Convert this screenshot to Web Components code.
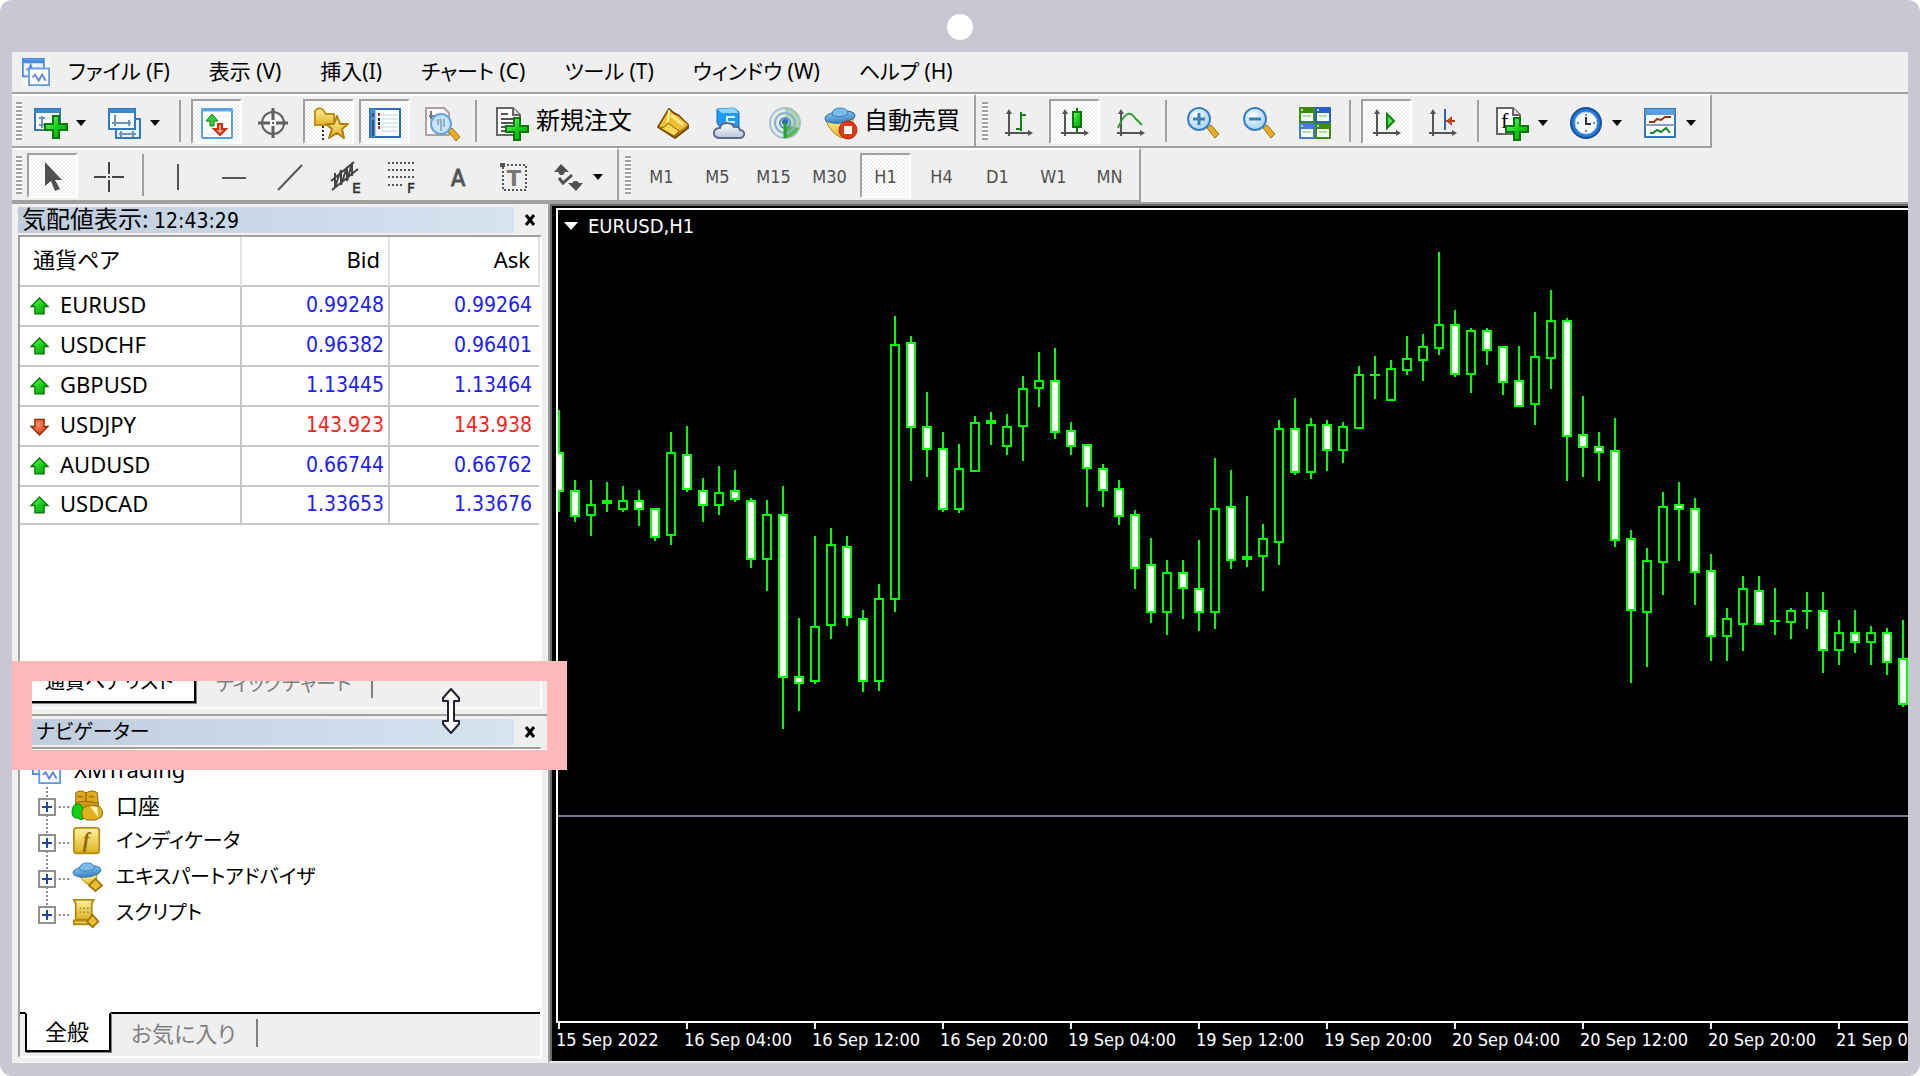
<!DOCTYPE html>
<html lang="ja">
<head>
<meta charset="utf-8">
<title>EURUSD,H1</title>
<style>
  html, body { margin: 0; height: 100%; background: #fff; }
  body {
    --face: #efefef;
    --shade: #a0a0a0;
    --ui: "Noto Sans", "Noto Sans CJK JP", sans-serif;
    --tahoma: "DejaVu Sans Condensed", "DejaVu Sans", "Noto Sans CJK JP", sans-serif;
    font-family: var(--ui);
    font-size: 22px;
    line-height: 28px;
    color: #000;
  }
  dock-panel time { font: 21px/22px "DejaVu Sans Condensed", "DejaVu Sans", sans-serif; }
</style>
</head>
<body>
<device-frame>
  <trade-terminal>
    <menu-bar slot="menu"></menu-bar>

    <tool-bar slot="tools">
      <tool-group>
        <tool-button icon="newchart" label="新規チャート" drop></tool-button>
        <tool-button icon="profiles" label="プロファイル" drop></tool-button>
        <tool-separator></tool-separator>
        <tool-button icon="market" label="気配値表示" pressed></tool-button>
        <tool-button icon="target" label="データウィンドウ"></tool-button>
        <tool-button icon="navigator" label="ナビゲーター" pressed></tool-button>
        <tool-button icon="terminal" label="ターミナル" pressed></tool-button>
        <tool-button icon="tester" label="ストラテジーテスター"></tool-button>
        <tool-separator></tool-separator>
        <tool-button icon="neworder" wide>新規注文</tool-button>
        <tool-button icon="book" label="MetaEditor"></tool-button>
        <tool-button icon="cloud" label="VPS"></tool-button>
        <tool-button icon="signal" label="シグナル"></tool-button>
        <tool-button icon="expert" wide>自動売買</tool-button>
      </tool-group>
      <tool-group>
        <tool-button icon="bars" label="バーチャート"></tool-button>
        <tool-button icon="candles" label="ローソク足" pressed></tool-button>
        <tool-button icon="line" label="ラインチャート"></tool-button>
        <tool-separator></tool-separator>
        <tool-button icon="zoomin" label="ズームイン"></tool-button>
        <tool-button icon="zoomout" label="ズームアウト"></tool-button>
        <tool-button icon="tile" label="整列"></tool-button>
        <tool-separator></tool-separator>
        <tool-button icon="autoscroll" label="自動スクロール" pressed></tool-button>
        <tool-button icon="shift" label="チャートシフト"></tool-button>
        <tool-separator></tool-separator>
        <tool-button icon="indicator" label="インディケータ" drop></tool-button>
        <tool-button icon="clock" label="時間足設定" drop></tool-button>
        <tool-button icon="template" label="定型チャート" drop></tool-button>
      </tool-group>
    </tool-bar>

    <tool-bar slot="tools">
      <tool-group>
        <tool-button icon="pointer" label="カーソル" pressed></tool-button>
        <tool-button icon="cross" label="クロスヘア"></tool-button>
        <tool-separator narrow></tool-separator>
        <tool-button icon="vline" label="垂直線"></tool-button>
        <tool-button icon="hline" label="水平線"></tool-button>
        <tool-button icon="trend" label="トレンドライン"></tool-button>
        <tool-button icon="channel" label="チャネル"></tool-button>
        <tool-button icon="fibo" label="フィボナッチ"></tool-button>
        <tool-button icon="textA" label="テキスト"></tool-button>
        <tool-button icon="textT" label="ラベル"></tool-button>
        <tool-button icon="arrows" label="矢印" drop></tool-button>
      </tool-group>
      <tool-group>
        <tool-button>M1</tool-button>
        <tool-button>M5</tool-button>
        <tool-button>M15</tool-button>
        <tool-button>M30</tool-button>
        <tool-button pressed>H1</tool-button>
        <tool-button>H4</tool-button>
        <tool-button>D1</tool-button>
        <tool-button>W1</tool-button>
        <tool-button>MN</tool-button>
      </tool-group>
    </tool-bar>

    <dock-panel slot="dock" style="flex-grow:514">
      <span slot="title">気配値表示: <time>12:43:29</time></span>
      <market-watch></market-watch>
      <tab-strip slot="tabs" kana tabs="通貨ペアリスト,ティックチャート"></tab-strip>
    </dock-panel>
    <dock-panel slot="dock" inset style="flex-grow:347">
      <span slot="title">ナビゲーター</span>
      <nav-tree></nav-tree>
      <tab-strip slot="tabs" tabs="全般,お気に入り"></tab-strip>
      <focus-frame slot="overlay"></focus-frame>
    </dock-panel>

    <price-chart slot="chart" symbol="EURUSD,H1"></price-chart>
  </trade-terminal>
</device-frame>

<script>
const DEFS = `<defs>
  <linearGradient id="g" x1="0" y1="0" x2="1" y2="1"><stop offset="0" stop-color="#7dff7d"/><stop offset=".5" stop-color="#18d018"/><stop offset="1" stop-color="#0a9a0a"/></linearGradient>
  <linearGradient id="y" x1="0" y1="0" x2="0" y2="1"><stop offset="0" stop-color="#fff4a0"/><stop offset="1" stop-color="#e0b020"/></linearGradient>
  <linearGradient id="b" x1="0" y1="0" x2="0" y2="1"><stop offset="0" stop-color="#8cc8f4"/><stop offset="1" stop-color="#3a80c0"/></linearGradient>
  <linearGradient id="c" x1="0" y1="0" x2="0" y2="1"><stop offset="0" stop-color="#fff"/><stop offset="1" stop-color="#b8c4d8"/></linearGradient>
  <radialGradient id="l" cx=".4" cy=".35" r=".8"><stop offset="0" stop-color="#fff"/><stop offset="1" stop-color="#8cc8f0"/></radialGradient>
  <radialGradient id="r" cx=".4" cy=".35" r=".8"><stop offset="0" stop-color="#ff9060"/><stop offset="1" stop-color="#c02800"/></radialGradient>
</defs>`;
const PLUS = (x, y) => `<path transform="translate(${x} ${y})" d="M9 1h6v8h8v6h-8v8H9v-8H1V9h8z" fill="url(#g)" stroke="#087808" stroke-width="2"/>`;
const AXES = `<path d="M6 5v24M2 26h25" stroke="#555" stroke-width="2" fill="none"/><path d="M6 2l-3 5h6zM30 26l-5-3v6z" fill="#555"/>`;
const HAT = `<ellipse cx="16" cy="10" rx="15" ry="6" fill="url(#b)" stroke="#2870a8" transform="rotate(-7 16 10)"/><path d="M8 8q0-7 8-7t8 6q-8 5-16 1z" fill="#7cbcec" stroke="#3a80b8"/>`;
const LENS = (s) => `<path d="M20 21l4-3 8 9-4 4z" fill="#e4b020" stroke="#a07010"/><circle cx="12" cy="12" r="11" fill="url(#l)" stroke="#3a80c8" stroke-width="2"/>${s}`;
const ICONS = {
  app: `<rect x="1" y="1" width="24" height="20" fill="#eef4ff" stroke="#4a8ae0" stroke-width="2"/><path d="M1 4h24" stroke="#4a8ae0" stroke-width="4"/><path d="M5 13h3l2-5 3 8 2-4h6" fill="none" stroke="#4a8ae0" stroke-width="2"/><rect x="8" y="12" width="23" height="19" fill="#fff" stroke="#5a9ae8" stroke-width="2"/><path d="M12 22l3-3 4 7 4-7 4 7" fill="none" stroke="#5a80e0" stroke-width="2"/>`,
  newchart: `<rect x="1" y="2" width="25" height="21" fill="#f6faff" stroke="#3478b8" stroke-width="2"/><path d="M1 4h25" stroke="#3f88cc" stroke-width="4"/><path d="M8 9v12M5 11h6M5 18h6" stroke="#6a94b4" stroke-width="2"/>${PLUS(10, 8)}`,
  profiles: `<rect x="8" y="12" width="24" height="19" fill="#e8f2fc" stroke="#3478b8" stroke-width="2"/><path d="M11 27h17M13 24v6M25 24v6" stroke="#6a94b4" stroke-width="2"/><rect x="1" y="2" width="26" height="20" fill="#f6faff" stroke="#3478b8" stroke-width="2"/><path d="M1 4h26" stroke="#3f88cc" stroke-width="4"/><path d="M7 8v11M4 16h19M21 13v6" stroke="#6a94b4" stroke-width="2"/>`,
  market: `<rect x="1" y="2" width="30" height="29" rx="1" fill="#fff" stroke="#5a9edc" stroke-width="2"/><path d="M1 3h30" stroke="#5aa4e8" stroke-width="3"/><path d="M5 9h22M5 15h22M5 21h22M5 27h22" stroke="#e0e6ec"/><path d="M11 7l6 7h-4v5H9v-5H5z" fill="#3cc83c" stroke="#108010"/><path d="M19 28l-6-6h4v-5h4v5h4z" fill="#f8a080" stroke="#c83010" stroke-width="2"/>`,
  target: `<circle cx="16" cy="16" r="11" fill="#f4f4f4" stroke="#606060" stroke-width="2"/><path d="M16 1v12M16 19v12M1 16h12M19 16h12" stroke="#606060" stroke-width="3"/><path d="M15 16h2" stroke="#606060" stroke-width="2"/>`,
  navigator: `<path d="M2 18V4q4-5 8-1l3 4h8v11z" fill="url(#y)" stroke="#c09020" stroke-width="2"/><path d="M10 19v14" stroke="#333" stroke-width="2" stroke-dasharray="2 2"/><path d="M24 9l3 8h8l-6 5 2 9-7-5-8 5 3-9-6-5h8z" fill="url(#y)" stroke="#b08010" stroke-width="2" stroke-linejoin="round"/>`,
  terminal: `<rect x="1" y="2" width="30" height="28" fill="#fff" stroke="#2f6fb0" stroke-width="2"/><path d="M4 2v28" stroke="#4a90d0" stroke-width="5"/><path d="M4 6v4M4 13v16" stroke="#223" stroke-width="2" opacity=".6"/><path d="M12 8h17M12 12h17M12 16h17M12 20h17M12 24h17" stroke="#b8d4f0" stroke-width="1"/><path d="M10 6v3M10 19v3" stroke="#e02020" stroke-width="2"/><path d="M10 11v3M10 15v3" stroke="#222" stroke-width="2"/>`,
  tester: `<path d="M1 1h18l5 5v22H1z" fill="#fafafa" stroke="#b0a0a0" stroke-width="2"/><path d="M6 4v8M4 9h6v6M15 6v10M19 10v10" stroke="#777" stroke-width="2" fill="none"/><path d="M23 24l4-3 8 9-4 4z" fill="#e4b020" stroke="#a07010"/><circle cx="16" cy="17" r="10" fill="#c4e2f8" fill-opacity=".9" stroke="#68a4d8" stroke-width="2"/><path d="M13 12v6M16 12v12M19 12v8" stroke="#90b0c8" stroke-width="2"/>`,
  neworder: `<path d="M1 1h16l7 7v20H1z" fill="#fff" stroke="#666" stroke-width="2"/><path d="M17 1v7h7" fill="#ddd" stroke="#666" stroke-width="2"/><path d="M5 7h7M5 12h12M5 16h12M5 20h8M5 24h7" stroke="#555" stroke-width="2"/>${PLUS(9, 10)}`,
  book: `<path d="M1 20L12 2q5 5 9 6l10 10v3L18 31z" fill="#b87814" stroke="#7a4a08" stroke-width="2" stroke-linejoin="round"/><path d="M12 3q5 5 9 6l10 9-9 6-11-7q-3 6-9 3z" fill="#f0c030"/><path d="M12 3q0 8-2 13" stroke="#fff0a0" stroke-width="2" fill="none"/><path d="M2 20q6 2 9-4l11 8-5 5z" fill="#ffd858" stroke="#98600c"/><path d="M14 8l12 10" stroke="#ffe88c" stroke-width="3"/>`,
  cloud: `<path d="M4 2l17-1 5 4v17H8L4 16z" fill="#1e9cf8" stroke="#1070c0"/><path d="M4 2l5 4h17L21 1z" fill="#90d4ff"/><path d="M13 10h9M13 15h9M14 9v10" stroke="#d8f0ff" stroke-width="2"/><path d="M6 31q-6-1-5-6 1-4 6-4 1-5 7-5 5 0 7 4 5-1 6 3 5 1 4 5-1 3-4 3z" fill="url(#c)" stroke="#5a6c8c" stroke-width="2"/>`,
  signal: `<circle cx="16" cy="16" r="15" fill="#e4ebe8" stroke="#a8c0d0" stroke-width="2"/><path d="M16 16V1q15 1 15 15t-15 15z" fill="#90c890" opacity=".6"/><path d="M16 18l14 3q-4 9-14 10z" fill="#58b858"/><circle cx="16" cy="16" r="10" fill="none" stroke="#8cb0d0" stroke-width="2"/><circle cx="16" cy="16" r="5" fill="none" stroke="#5890c8" stroke-width="2"/><circle cx="16" cy="15" r="3" fill="#2868b0"/><path d="M16 16v15" stroke="#20a820" stroke-width="3"/>`,
  expert: `<path d="M2 13l27-1v10L18 31q-12-5-16-18z" fill="url(#y)" stroke="#b08818"/>${HAT}<circle cx="24" cy="23" r="9" fill="#e03818" stroke="#b02808"/><path d="M20 19h8v8h-8z" fill="#fff"/>`,
  bars: `${AXES}<path d="M18 5v19M13 22h5M18 8h5" stroke="#108010" stroke-width="2" fill="none"/>`,
  candles: `${AXES}<path d="M18 1v24" stroke="#087808" stroke-width="2"/><rect x="14" y="5" width="8" height="15" fill="url(#g)" stroke="#087808" stroke-width="2"/>`,
  line: `${AXES}<path d="M3 21q9-22 17-10l7 7" fill="none" stroke="#3a9a3a" stroke-width="2"/>`,
  zoomin: LENS(`<path d="M12 6v12M6 12h12" stroke="#3a80b8" stroke-width="3"/>`),
  zoomout: LENS(`<path d="M6 12h12" stroke="#3a80b8" stroke-width="3"/>`),
  tile: [[0, 0, '#3c8c10'], [16, 0, '#2860c8'], [0, 16, '#4878d8'], [16, 16, '#3c8c10']].map(([x, y, c]) => `<rect x="${x}" y="${y}" width="16" height="16" fill="${c}"/><rect x="${x + 2}" y="${y + 6}" width="12" height="8" fill="#f4faf4"/><path d="M${x + 2} ${y + 3}h2M${x + 4} ${y + 9}h8" stroke="#b8d8b8" stroke-width="2"/>`).join(''),
  autoscroll: `${AXES}<path d="M16 7v14l7-7z" fill="#58e058" stroke="#108010" stroke-width="2"/>`,
  shift: `${AXES}<path d="M18 2v21" stroke="#2868a8" stroke-width="2"/><path d="M19 14h9" stroke="#a03810" stroke-width="2"/><path d="M19 14l6-5v10z" fill="#c04818"/>`,
  indicator: `<path d="M1 1h16l7 7v19H1z" fill="#fff" stroke="#666" stroke-width="2"/><path d="M17 1v7h7" fill="#ddd" stroke="#666" stroke-width="2"/><text x="5" y="21" font-family="Liberation Serif,serif" font-size="22">f</text>${PLUS(9, 10)}`,
  clock: `<circle cx="16" cy="16" r="15" fill="#2878d8" stroke="#1450a0" stroke-width="2"/><circle cx="16" cy="16" r="11" fill="#f4f8fc" stroke="#a8c8f0"/><path d="M16 10v7h5" fill="none" stroke="#333" stroke-width="2"/><path d="M16 7v2M16 23v2M7 16h2M23 16h2" stroke="#888" stroke-width="2"/>`,
  template: `<rect x="1" y="2" width="30" height="28" fill="#f8fbff" stroke="#3478b8" stroke-width="2"/><path d="M1 5h30" stroke="#5aa0dc" stroke-width="6"/><path d="M1 18h30" stroke="#88a0b8" stroke-width="2"/><path d="M5 15h5l3-3 4 1 4-3h6" fill="none" stroke="#a02c10" stroke-width="2"/><path d="M6 26h3l4-3 4 2 5-4 4 5" fill="none" stroke="#208820" stroke-width="2"/>`,
  pointer: `<path d="M8 1v24l6-5 4 10 5-2-5-9h7z" fill="#505050"/>`,
  cross: `<path d="M16 1v12M16 19v12M1 16h12M19 16h12M15 16h2" stroke="#444" stroke-width="2"/>`,
  vline: `<path d="M16 3v26" stroke="#555" stroke-width="2"/>`,
  hline: `<path d="M4 17h24" stroke="#555" stroke-width="2"/>`,
  trend: `<path d="M4 29L28 4" stroke="#555" stroke-width="2"/>`,
  channel: `<path d="M1 20L24 1M2 29L28 8M5 12v14M11 9v15M17 6v14M22 2v13M5 26l6-17M11 24l6-18M17 20l5-18" stroke="#444" stroke-width="2" fill="none"/><path d="M21 19h12v14H21z" fill="#efefef"/><text x="22" y="32" font-family="DejaVu Sans" font-size="14" fill="#333" stroke="#333" stroke-width=".5">E</text>`,
  fibo: `<path d="M2 2h27M2 9h27M2 16h27M2 24h15" stroke="#555" stroke-width="2" stroke-dasharray="2 2"/><text x="21" y="32" font-family="DejaVu Sans" font-size="14" fill="#333" stroke="#333" stroke-width=".5">F</text>`,
  textA: `<text x="16" y="25" text-anchor="middle" font-family="DejaVu Sans Condensed" font-size="23" fill="#555" stroke="#555">A</text>`,
  textT: `<rect x="5" y="4" width="23" height="25" fill="none" stroke="#555" stroke-width="2" stroke-dasharray="2 2"/><path d="M2 2h5v4H2z" fill="#555"/><text x="16" y="25" text-anchor="middle" font-family="DejaVu Sans" font-weight="bold" font-size="21" fill="#777">T</text>`,
  arrows: `<path d="M10 3l8 8h-4l-2 3H9l-2-3H3zM25 30l-8-8h4l2-2h3l2 2h4z" fill="#505050"/><path d="M8 17l4 5 9-8" stroke="#505050" stroke-width="3" fill="none"/>`,
  up: `<path d="M16 3l13 13h-6v11H9V16H3z" fill="url(#g)" stroke="#0a7a0a" stroke-width="2"/>`,
  down: `<path d="M16 29L3 16h6V5h14v11h6z" fill="url(#r)" stroke="#902808" stroke-width="2"/>`,
  accounts: `<path d="M4 3q5-4 11 0 7-4 12 0l1 12H4z" fill="#e0aa18" stroke="#8a6008"/><path d="M6 7h6M18 7h6M15 3v12" stroke="#a87810" stroke-width="2"/><path d="M4 14q8-4 24 0v11H4z" fill="#d09a10" stroke="#8a6008"/><path d="M0 24q0-9 6-9t7 10-7 5q-6 0-6-6z" fill="#10d010" stroke="#088008"/><path d="M11 29q-2-11 6-12l12 0q6 7 2 12l-6 3h-9z" fill="#e4b020" stroke="#8a6008"/><path d="M19 17l9 12-1-11z" fill="#fff4c0"/>`,
  findicator: `<rect x="2" y="2" width="27" height="27" rx="3" fill="url(#y)" stroke="#b89018" stroke-width="2"/><text x="15" y="22" text-anchor="middle" font-family="Liberation Serif,serif" font-style="italic" font-weight="bold" font-size="22" fill="#8a6810">f</text>`,
  advisor: `<path d="M7 13h20l-3 12q-10 1-17-12z" fill="url(#y)" stroke="#b08818"/>${HAT}<path d="M25 18l7 7-7 6-7-6z" fill="#ecc030" stroke="#a07810" stroke-width="2"/>`,
  script: `<path d="M2 2h21l-2 4v17H4V6z" fill="url(#y)" stroke="#b08818" stroke-width="2"/><path d="M2 24h21v4H2z" fill="#f0cc48" stroke="#b08818" stroke-width="2"/><path d="M8 11h2M12 11h2M16 11h2M8 15h2M12 15h2M16 15h2" stroke="#a89030" stroke-width="2"/><path d="M22 18l6 7-6 6-6-6z" fill="#ecc030" stroke="#a07810" stroke-width="2"/>`
};

const define = (name, html, setup) => {
  const t = document.createElement('template');
  t.innerHTML = html;
  customElements.define(name, class extends HTMLElement {
    constructor() {
      super();
      this.attachShadow({ mode: 'open' }).appendChild(t.content.cloneNode(true));
    }
    connectedCallback() {
      if (setup && !this.ready) { this.ready = true; setup(this, this.shadowRoot); }
    }
  });
};

define('ui-icon', `<style>
  :host { display: block; flex: none; width: 32px; height: 32px; }
  svg { display: block; width: 100%; height: 100%; overflow: visible; }
</style><svg viewBox="0 0 32 32" aria-hidden="true"></svg>`,
(el, root) => { root.querySelector('svg').innerHTML = DEFS + ICONS[el.getAttribute('name')]; });

define('device-frame', `<style>
  :host { display: flex; flex-direction: column; box-sizing: border-box; height: 100vh; background: #c8c7d3; border-radius: 12px; padding: 0 12px 13px; }
  header { display: flex; justify-content: center; align-items: center; box-sizing: border-box; height: 52px; padding-top: 2px; }
  i { width: 26px; height: 26px; border-radius: 50%; background: #fff; }
  main { display: flex; flex: 1; min-height: 0; }
</style><header><i></i></header><main><slot></slot></main>`);

define('trade-terminal', `<style>
  :host { display: flex; flex-direction: column; flex: 1; min-width: 0; background: var(--face); overflow: hidden; }
  .work { display: flex; flex: 1; min-height: 0; }
  .dock { display: flex; flex-direction: column; width: 536px; flex: none; }
</style>
<slot name="menu"></slot><slot name="tools"></slot>
<div class="work"><div class="dock"><slot name="dock"></slot></div><slot name="chart"></slot></div>`);

define('menu-bar', `<style>
  :host { display: block; border-bottom: 2px solid var(--shade); }
  nav { display: flex; align-items: center; gap: 39px; height: 40px; padding-left: 10px; }
  ui-icon { width: 28px; height: 28px; margin-right: -21px; background: #f8f8f8; }
  button { font: inherit; font-size: 21px; font-feature-settings: "palt"; border: 0; padding: 0 0 3px; background: none; color: #000; white-space: nowrap; }
</style><nav><ui-icon name="app"></ui-icon></nav>`,
(el, root) => {
  const nav = root.querySelector('nav');
  for (const t of ['ファイル (F)', '表示 (V)', '挿入(I)', 'チャート (C)', 'ツール (T)', 'ウィンドウ (W)', 'ヘルプ (H)']) {
    const b = document.createElement('button');
    b.textContent = t;
    nav.append(b);
  }
});

define('tool-bar', `<style>
  :host { display: flex; height: 54px; }
</style><slot></slot>`);

define('tool-group', `<style>
  :host { display: flex; align-items: center; gap: 5px; box-sizing: border-box; padding: 0 4px; border: 2px solid var(--shade); border-left: 0; border-top-color: #fff; }
  :host(:not(:first-child)) { padding-left: 6px; }
  i { width: 6px; height: 38px; background: repeating-linear-gradient(#a0a0a0 0 2px, #fff 2px 4px); }
</style><i></i><slot></slot>`);

define('tool-separator', `<style>
  :host { display: block; width: 2px; height: 42px; margin: 0 5px 0 4px; background: var(--shade); }
  :host([narrow]) { margin: 0 3px; }
</style>`);

define('tool-button', `<style>
  :host { display: block; }
  button { display: flex; align-items: center; justify-content: center; box-sizing: border-box; width: 51px; height: 45px; padding: 3px 0 0; border: 2px solid transparent; background: none; font: 18px/24px var(--tahoma); color: #505050; white-space: nowrap; }
  :host([pressed]) button { border-color: var(--shade) #fff #fff var(--shade); background: repeating-conic-gradient(#fff 0 25%, #f0f0f0 0 50%) 0 0 / 4px 4px; }
  :host([drop]) button { width: 69px; gap: 10px; justify-content: flex-start; padding-left: 5px; }
  :host([drop]) button::after { content: ""; border: 5px solid transparent; border-top: 6px solid #000; border-bottom: 0; }
  :host([wide]) button { width: auto; gap: 8px; padding: 3px 8px 0 7px; font-size: 24px; color: #000; }
  :host([wide]) span { padding-bottom: 4px; }
</style><button type="button"><span><slot></slot></span></button>`,
(el, root) => {
  const b = root.querySelector('button');
  if (!el.textContent.trim()) root.querySelector('span').remove();
  if (el.hasAttribute('label')) b.setAttribute('aria-label', el.getAttribute('label'));
  b.setAttribute('aria-pressed', el.hasAttribute('pressed'));
  if (el.hasAttribute('icon')) {
    const i = document.createElement('ui-icon');
    i.setAttribute('name', el.getAttribute('icon'));
    b.prepend(i);
  }
});

define('dock-panel', `<style>
  :host { display: flex; flex-direction: column; flex-basis: 0; min-height: 0; position: relative; box-sizing: border-box; padding: 3px 6px 5px; border-top: 2px solid var(--shade); }
  header { display: flex; align-items: center; height: 26px; margin: 0 -4px 2px 0; }
  .title { flex: 1; height: 26px; padding-left: 4px; font: 24px/22px "Noto Sans CJK JP", sans-serif; font-feature-settings: "palt"; background: linear-gradient(90deg, #bfcddc, #d6e4f2); white-space: nowrap; }
  :host([inset]) .title { padding-left: 18px; font-size: 20px; line-height: 24px; }
  button { width: 32px; height: 26px; padding: 0; border: 0; background: none; }
  svg { display: block; margin: auto; }
  .body { display: flex; flex-direction: column; flex: 1; min-height: 0; border: 2px solid #fff; border-top-color: var(--shade); border-left-color: var(--shade); background: #fff; }
  .content { flex: 1; min-height: 0; overflow: hidden; }
</style>
<header><div class="title"><slot name="title"></slot></div><button aria-label="閉じる"><svg width="12" height="12" viewBox="0 0 12 12"><path d="M2 1l8 10M10 1L2 11" stroke="#000" stroke-width="3"/></svg></button></header>
<div class="body"><div class="content"><slot></slot></div><slot name="tabs"></slot></div>
<slot name="overlay"></slot>`);

define('market-watch', `<style>
  :host { display: block; }
  table { width: 100%; border-collapse: separate; border-spacing: 0; table-layout: fixed; }
  th, td { box-sizing: border-box; padding: 0 0 5px; border-bottom: 2px solid #c8c8c8; border-right: 2px solid #c8c8c8; font-weight: 400; }
  th { height: 50px; border-right-color: #e2e2e2; text-align: right; padding-right: 8px; font-feature-settings: "palt"; }
  th:first-child { width: 222px; text-align: left; padding: 0 0 5px 13px; }
  th:nth-child(2) { width: 148px; }
  td { height: 40px; }
  tr:last-child td { height: 38px; }
  td.n { text-align: right; padding: 0 4px 2px 0; font: 21px/28px var(--tahoma); color: #2020ff; }
  td.n:last-child { border-right-color: transparent; padding-right: 6px; }
  tr.down td.n { color: #ff2020; }
  .sym { display: flex; align-items: center; gap: 10px; padding-left: 9px; }
  ui-icon { width: 21px; height: 21px; margin-top: 5px; }
</style><table><thead><tr><th>通貨ペア</th><th>Bid</th><th>Ask</th></tr></thead><tbody></tbody></table>`,
(el, root) => {
  const rows = [['EURUSD', '0.99248', '0.99264'], ['USDCHF', '0.96382', '0.96401'], ['GBPUSD', '1.13445', '1.13464'],
    ['USDJPY', '143.923', '143.938', 'down'], ['AUDUSD', '0.66744', '0.66762'], ['USDCAD', '1.33653', '1.33676']];
  root.querySelector('tbody').innerHTML = rows.map(([s, b, a, d = 'up']) =>
    `<tr class="${d}"><td><div class="sym"><ui-icon name="${d}"></ui-icon>${s}</div></td><td class="n">${b}</td><td class="n">${a}</td></tr>`).join('');
});

define('tab-strip', `<style>
  :host { display: flex; align-items: flex-start; box-sizing: border-box; height: 44px; padding-left: 5px; border-top: 2px solid #000; background: var(--face); }
  :host([kana]) { font-size: 20px; }
  button { font: inherit; font-feature-settings: "palt"; color: #808080; background: none; border: 0; padding: 0 20px 4px; height: 28px; margin-top: 5px; border-right: 2px solid #808080; white-space: nowrap; }
  button[aria-selected=true] { height: 40px; margin-top: -2px; padding: 0 20px 2px 18px; color: #000; background: #fff; border: 2px solid #000; border-top-color: #fff; box-shadow: 1px 1px #808080; }
</style>`,
(el, root) => {
  el.setAttribute('role', 'tablist');
  el.getAttribute('tabs').split(',').forEach((t, i) => {
    const b = document.createElement('button');
    b.textContent = t;
    b.setAttribute('role', 'tab');
    b.setAttribute('aria-selected', i === 0);
    root.append(b);
  });
});

define('nav-tree', `<style>
  :host { display: block; padding: 2px 0 0 12px; }
  ul { list-style: none; margin: 0; padding: 0; }
  .row { display: flex; align-items: center; height: 36px; font-feature-settings: "palt"; white-space: nowrap; }
  .root { gap: 13px; }
  .root ui-icon { width: 29px; height: 29px; }
  li li { padding-left: 6px; background: repeating-linear-gradient(#909090 0 2px, transparent 2px 4px) 14px 0 / 2px 100% no-repeat; }
  li li:last-child { background-size: 2px 50%; }
  .kana { font-size: 20px; }
  button { box-sizing: border-box; width: 18px; height: 18px; padding: 0; border: 2px solid #909090; background: #fff; display: flex; align-items: center; justify-content: center; }
  button, i { margin-top: 4px; }
  i { width: 10px; height: 2px; margin-left: 3px; margin-right: 3px; background: repeating-linear-gradient(90deg, #909090 0 2px, transparent 2px 4px); }
  li li ui-icon { width: 30px; height: 30px; margin-right: 14px; }
</style><ul><li><div class="row root"><ui-icon name="app"></ui-icon>XMTrading</div><ul class="kids"></ul></li></ul>`,
(el, root) => {
  root.querySelector('.kids').innerHTML = [['accounts', '口座', ''], ['findicator', 'インディケータ', 'kana'], ['advisor', 'エキスパートアドバイザ', 'kana'], ['script', 'スクリプト', 'kana']].map(([i, t, k]) =>
    `<li><div class="row ${k}"><button aria-label="展開"><svg width="10" height="10" viewBox="0 0 10 10"><path d="M5 0v10M0 5h10" stroke="#2048a0" stroke-width="2"/></svg></button><i></i><ui-icon name="${i}"></ui-icon>${t}</div></li>`).join('');
});

/* Highlight round the splitter between the two docked panels, with a resize cursor on it. */
define('focus-frame', `<style>
  :host { position: absolute; z-index: 2; left: 0; right: -19px; top: -55px; height: 109px; box-sizing: border-box; border: 20px solid #ffb9ba; pointer-events: none; }
  svg { position: absolute; right: 85px; top: 6px; }
</style><svg width="22" height="48" viewBox="0 0 22 48"><path d="M11 2l8 9v3h-5v20h5v3l-8 9-8-9v-3h5V14H3v-3z" fill="#fff" stroke="#223" stroke-width="2" stroke-linejoin="round"/></svg>`);

/* Each candle: high, body top, body bottom, low, kind (1 falling, 0 rising). */
const CANDLES = [
  [210,252,292,312,1],[280,290,317,322,1],[280,304,316,336,0],[282,300,304,312,0],[286,300,310,312,0],[290,300,310,326,1],
  [308,308,338,341,1],[232,252,336,345,0],[226,254,290,292,1],[278,290,306,322,1],[266,292,306,315,0],[270,290,300,302,1],
  [298,300,360,368,1],[300,314,360,391,0],[286,314,478,529,1],[418,476,484,511,1],[336,426,482,484,0],[328,344,426,439,0],
  [336,346,418,426,1],[410,418,482,492,1],[384,398,482,491,0],[116,144,400,412,0],[136,142,228,281,1],[192,226,250,277,1],
  [232,248,310,312,1],[244,268,310,313,0],[216,222,272,272,0],[212,220,224,245,0],[214,226,247,255,0],[176,188,227,261,0],
  [152,180,189,207,0],[148,180,233,239,1],[222,230,247,255,1],[244,244,269,307,1],[264,268,291,307,1],[280,288,317,325,1],
  [310,314,369,389,1],[338,364,413,423,1],[360,372,413,435,0],[360,372,389,419,1],[340,388,413,431,1],[258,308,413,429,0],
  [270,306,361,369,1],[296,356,360,367,0],[324,338,357,391,0],[220,228,343,365,0],[198,228,273,275,1],[218,224,273,279,0],
  [220,224,251,271,1],[222,226,251,263,0],[166,174,229,229,0],[156,174,176,199,0],[160,168,201,201,0],[136,158,171,175,0],
  [134,146,161,181,0],[52,124,149,155,0],[110,124,175,177,1],[128,130,175,193,0],[128,130,151,165,1],[146,146,183,195,1],
  [146,180,207,207,1],[112,156,205,225,0],[90,120,159,189,0],[118,120,237,281,1],[196,234,248,277,1],[232,246,253,281,1],
  [218,250,341,347,1],[330,338,411,483,1],[348,360,413,467,0],[292,306,363,395,0],[282,304,310,361,1],[298,308,373,405,1],
  [354,370,437,461,1],[408,418,437,461,0],[376,388,425,451,0],[376,390,425,425,1],[388,420,422,435,0],[408,410,423,439,0],
  [392,410,412,429,0],[392,410,451,473,1],[420,432,451,465,0],[410,432,443,453,1],[426,432,443,465,0],[428,432,463,475,1],
  [420,458,505,507,1]
];
define('price-chart', `<style>
  :host { display: flex; flex: 1; min-width: 0; box-sizing: border-box; border: 2px solid var(--shade); border-right: 0; border-bottom-color: #e8e8e8; background: #000; color: #fff; font-family: var(--tahoma); }
  .well { display: flex; flex-direction: column; flex: 1; min-width: 0; border: 2px solid #696969; border-right: 0; border-bottom: 0; padding: 2px 0 0 4px; }
  .plot { display: flex; flex-direction: column; flex: 1; min-height: 0; border: 2px solid #fff; border-right: 0; position: relative; }
  h1 { position: absolute; left: 6px; top: 4px; margin: 0; display: flex; align-items: center; gap: 10px; font: 20px/24px var(--tahoma); }
  h1::before { content: ""; border: 7px solid transparent; border-top: 8px solid #fff; border-bottom: 0; }
  svg { display: block; width: 100%; flex: 1; min-height: 0; overflow: hidden; }
  .sub { height: 204px; border-top: 2px solid #6c7890; }
  .axis { display: flex; height: 38px; overflow: hidden; font-size: 18px; line-height: 22px; }
  .axis span { flex: none; width: 128px; box-sizing: border-box; white-space: nowrap; }
  .axis span::before { content: ""; display: block; width: 2px; height: 6px; margin-left: 2px; background: #fff; }
</style>
<div class="well"><div class="plot"><h1></h1><svg role="img"></svg><div class="sub"></div></div><div class="axis"></div></div>`,
(el, root) => {
  root.querySelector('h1').textContent = el.getAttribute('symbol');
  const svg = root.querySelector('svg');
  svg.setAttribute('aria-label', el.getAttribute('symbol'));
  svg.innerHTML = '<g transform="translate(1 -10)" shape-rendering="crispEdges">' + CANDLES.map(([h, t, b, l, f], i) => {
    const x = i * 16, body = b - t > 4
      ? `<rect x="${x - 4}" y="${t + 1}" width="8" height="${b - t - 2}" fill="${f ? '#fff' : '#000'}" stroke="#0f0" stroke-width="2"/>`
      : `<rect x="${x - 5}" y="${t}" width="10" height="${b - t}" fill="#0f0"/>`;
    return `<path d="M${x} ${h}V${l}" stroke="#0f0" stroke-width="2"/>${body}`;
  }).join('') + '</g>';
  root.querySelector('.axis').innerHTML = ['15 Sep 2022', '16 Sep 04:00', '16 Sep 12:00', '16 Sep 20:00', '19 Sep 04:00', '19 Sep 12:00', '19 Sep 20:00', '20 Sep 04:00', '20 Sep 12:00', '20 Sep 20:00', '21 Sep 04:00']
    .map(t => `<span>${t}</span>`).join('');
});
</script>
</body>
</html>
